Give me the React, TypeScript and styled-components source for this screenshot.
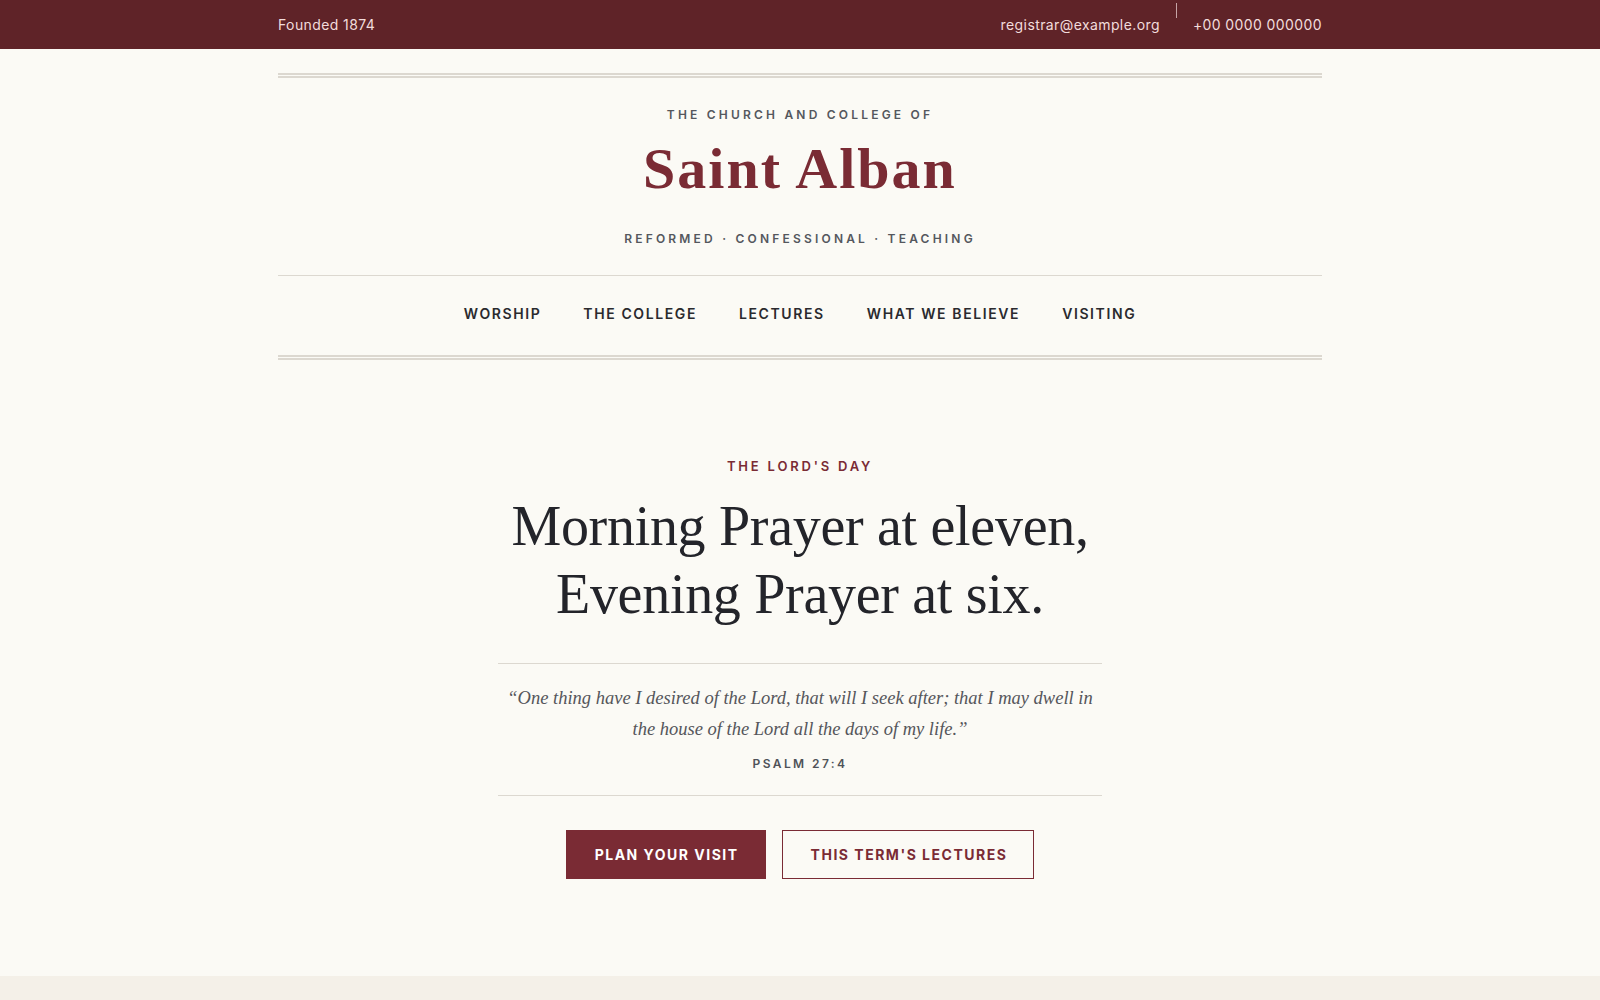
import React from "react";
import styled, { createGlobalStyle } from "styled-components";

const maroon = "#7a2b34";
const rule = "#dcd8d0";

const GlobalStyle = createGlobalStyle`
  html, body {
    margin: 0;
    padding: 0;
    background: #f4f0e8;
  }
  body {
    font-family: Inter, "Noto Sans", sans-serif;
    -webkit-font-smoothing: antialiased;
  }
`;

const NAV_ITEMS = ["Worship", "The College", "Lectures", "What We Believe", "Visiting"];

const App = () => {
  return (
    <>
      <GlobalStyle />
      <StyledTopBar>
        <StyledContainer>
          <StyledTopRow>
            <span>Founded 1874</span>
            <StyledContacts>
              <span>registrar@example.org</span>
              <StyledDivider />
              <span>+00 0000 000000</span>
            </StyledContacts>
          </StyledTopRow>
        </StyledContainer>
      </StyledTopBar>

      <StyledPage>
        <StyledContainer>
          <StyledMasthead>
            <StyledKicker>The Church and College of</StyledKicker>
            <StyledTitle>Saint Alban</StyledTitle>
            <StyledTagline>Reformed · Confessional · Teaching</StyledTagline>
          </StyledMasthead>
          <StyledNav>
            {NAV_ITEMS.map((item) => (
              <StyledNavLink key={item} href="#">
                {item}
              </StyledNavLink>
            ))}
          </StyledNav>
        </StyledContainer>

        <StyledHero>
          <StyledEyebrow>The Lord's Day</StyledEyebrow>
          <StyledHeading>
            Morning Prayer at eleven,
            <br />
            Evening Prayer at six.
          </StyledHeading>
          <StyledScripture>
            <StyledQuote>
              “One thing have I desired of the Lord, that will I seek after; that I may dwell in
              the house of the Lord all the days of my life.”
            </StyledQuote>
            <StyledCitation>Psalm 27:4</StyledCitation>
          </StyledScripture>
          <StyledActions>
            <StyledButton $primary href="#">
              Plan Your Visit
            </StyledButton>
            <StyledButton href="#">This Term's Lectures</StyledButton>
          </StyledActions>
        </StyledHero>
      </StyledPage>
      <StyledBand />
    </>
  );
};

const StyledContainer = styled.div`
  width: 1044px;
  margin: 0 auto;
`;

const StyledTopBar = styled.header`
  background: #5f2328;
  color: #f2dcdc;
  font-size: 14px;
  letter-spacing: 0.4px;
`;

const StyledTopRow = styled.div`
  height: 49px;
  display: flex;
  align-items: center;
  justify-content: space-between;
`;

const StyledContacts = styled.div`
  display: flex;
  align-items: center;
  gap: 16px;
  align-self: stretch;
`;

const StyledDivider = styled.span`
  align-self: flex-start;
  width: 1px;
  height: 15px;
  margin-top: 3px;
  background: rgba(242, 220, 220, 0.7);
`;

const StyledPage = styled.main`
  background: #fbfaf5;
  padding-top: 24px;
  padding-bottom: 97px;
`;

const StyledMasthead = styled.div`
  border-top: 5px double ${rule};
  border-bottom: 1px solid ${rule};
  padding: 29px 0 28px;
  display: flex;
  flex-direction: column;
  align-items: center;
`;

const StyledKicker = styled.div`
  font-size: 12px;
  line-height: 16px;
  font-weight: 600;
  letter-spacing: 3.2px;
  text-transform: uppercase;
  color: #54575d;
`;

const StyledTitle = styled.h1`
  margin: 17px 0 0;
  font-family: "Liberation Serif", "Times New Roman", serif;
  font-size: 58px;
  line-height: 58px;
  font-weight: 700;
  letter-spacing: 2px;
  color: ${maroon};
`;

const StyledTagline = styled.div`
  margin-top: 33px;
  font-size: 12px;
  line-height: 16px;
  font-weight: 600;
  letter-spacing: 3.2px;
  text-transform: uppercase;
  color: #54575d;
`;

const StyledNav = styled.nav`
  display: flex;
  justify-content: center;
  gap: 42px;
  padding: 30px 0 33px;
  border-bottom: 5px double ${rule};
`;

const StyledNavLink = styled.a`
  font-size: 14px;
  line-height: 16px;
  font-weight: 600;
  letter-spacing: 1.6px;
  text-transform: uppercase;
  text-decoration: none;
  color: #2a2a2e;
`;

const StyledHero = styled.section`
  display: flex;
  flex-direction: column;
  align-items: center;
  text-align: center;
  padding-top: 98px;
`;

const StyledEyebrow = styled.div`
  font-size: 13px;
  line-height: 16px;
  font-weight: 600;
  letter-spacing: 2.8px;
  text-transform: uppercase;
  color: ${maroon};
`;

const StyledHeading = styled.h2`
  margin: 18px 0 0;
  font-family: "Liberation Serif", "Times New Roman", serif;
  font-weight: 400;
  font-size: 56px;
  line-height: 68px;
  letter-spacing: -0.3px;
  color: #23242a;
`;

const StyledScripture = styled.blockquote`
  width: 604px;
  box-sizing: border-box;
  margin: 35px 0 0;
  padding: 19px 2px 23px;
  border-top: 1px solid ${rule};
  border-bottom: 1px solid ${rule};
`;

const StyledQuote = styled.p`
  margin: 0;
  font-family: "Liberation Serif", "Times New Roman", serif;
  font-style: italic;
  font-size: 18.5px;
  line-height: 31px;
  color: #55565b;
`;

const StyledCitation = styled.cite`
  display: block;
  margin-top: 11px;
  font-style: normal;
  font-size: 12px;
  line-height: 16px;
  font-weight: 600;
  letter-spacing: 2.4px;
  text-transform: uppercase;
  color: #4f5258;
`;

const StyledActions = styled.div`
  display: flex;
  gap: 16px;
  margin-top: 34px;
`;

const StyledButton = styled.a<{ $primary?: boolean }>`
  display: inline-flex;
  align-items: center;
  height: 49px;
  box-sizing: border-box;
  padding: 0 26px 0 28px;
  border: 1px solid ${maroon};
  background: ${(p) => (p.$primary ? maroon : "transparent")};
  color: ${(p) => (p.$primary ? "#ffffff" : maroon)};
  font-size: 14px;
  font-weight: 700;
  letter-spacing: 1.5px;
  text-transform: uppercase;
  text-decoration: none;
`;

const StyledBand = styled.footer`
  background: #f4f0e8;
  height: 60px;
`;

export default App;
